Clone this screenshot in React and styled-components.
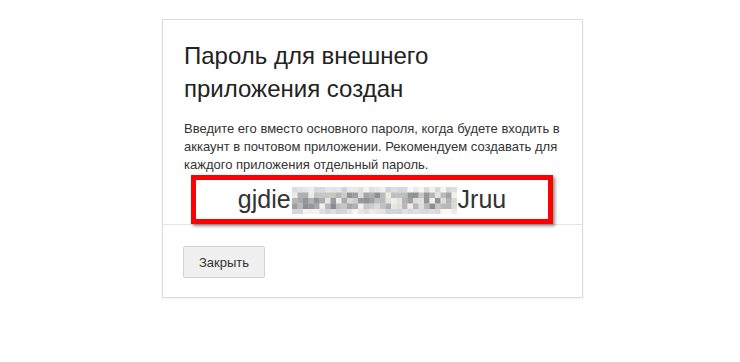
import React from "react";
import styled, { createGlobalStyle } from "styled-components";

const GlobalStyle = createGlobalStyle`
  html, body {
    margin: 0;
    padding: 0;
    background: #fff;
  }
  body {
    font-family: "Liberation Sans", Arial, sans-serif;
  }
`;

const Page = styled.div`
  width: 740px;
  height: 362px;
  padding: 19px 0 0 162px;
  box-sizing: border-box;
`;

const Card = styled.div`
  width: 421px;
  border: 1px solid #dcdcdc;
  box-shadow: 0 1px 2px rgba(0, 0, 0, 0.06);
  box-sizing: border-box;
  background: #fff;
`;

const Body = styled.div`
  padding: 19px 21px 0 21px;
  height: 205px;
  box-sizing: border-box;
  border-bottom: 1px solid #e5e5e5;
`;

const Title = styled.h1`
  margin: 0;
  font-size: 24px;
  line-height: 33px;
  font-weight: normal;
  color: #222;
`;

const Text = styled.p`
  margin: 15px 0 0;
  font-size: 13px;
  line-height: 18px;
  color: #333;
`;

const PasswordBox = styled.div`
  margin: 1px 0 0 7px;
  width: 362px;
  height: 49px;
  border: 5px solid #ff0000;
  box-sizing: border-box;
  background: #fff;
  box-shadow: 2px 2px 3px rgba(0, 0, 0, 0.45);
  display: flex;
  align-items: center;
  justify-content: center;
  font-size: 25px;
  color: #333;
  position: relative;
  z-index: 1;
`;

const Footer = styled.div`
  padding: 21px 20px 19px 20px;
`;

const Button = styled.button`
  width: 82px;
  height: 32px;
  background: #f0f0f0;
  border: 1px solid #d3d3d3;
  border-radius: 2px;
  font-family: "Liberation Sans", Arial, sans-serif;
  font-size: 13px;
  color: #333;
  padding: 0;
  cursor: pointer;
`;

const MosaicSvg = styled.svg`
  display: block;
  margin: 0 1px;
  position: relative;
  top: 1px;
`;

function Mosaic({ cols = 30, rows = 5, size = 5.5 }) {
  const cells = [];
  for (let r = 0; r < rows; r++) {
    for (let c = 0; c < cols; c++) {
      const h = Math.abs(Math.sin((c + 1) * 12.9898 + (r + 1) * 78.233) * 43758.5453) % 1;
      const edge = r === 0 || r === rows - 1;
      const base = edge ? 210 + h * 38 : 140 + h * 100;
      const v = Math.round(Math.min(250, base));
      const tint = Math.round((h - 0.5) * 10);
      cells.push(
        <rect
          key={r + "-" + c}
          x={c * size}
          y={r * size}
          width={size + 0.3}
          height={size + 0.3}
          fill={`rgb(${v + tint},${v},${v - tint})`}
        />
      );
    }
  }
  return (
    <MosaicSvg width={cols * size} height={rows * size} viewBox={`0 0 ${cols * size} ${rows * size}`}>
      {cells}
    </MosaicSvg>
  );
}

export default function App() {
  return (
    <>
      <GlobalStyle />
      <Page>
        <Card>
          <Body>
            <Title>
              Пароль для внешнего
              <br />
              приложения создан
            </Title>
            <Text>
              Введите его вместо основного пароля, когда будете входить в аккаунт в почтовом
              приложении. Рекомендуем создавать для каждого приложения отдельный пароль.
            </Text>
            <PasswordBox>
              <span>gjdie</span>
              <Mosaic />
              <span>Jruu</span>
            </PasswordBox>
          </Body>
          <Footer>
            <Button>Закрыть</Button>
          </Footer>
        </Card>
      </Page>
    </>
  );
}
